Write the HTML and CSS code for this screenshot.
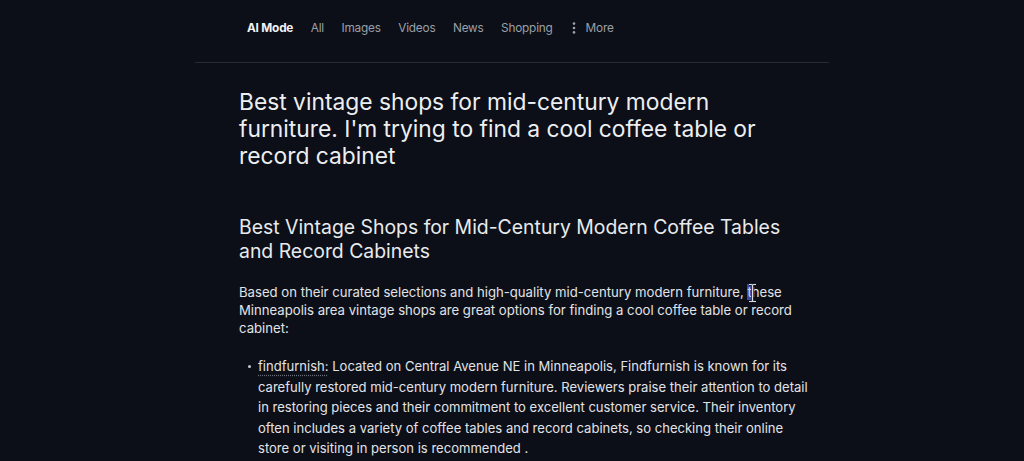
FILE: index.html
```html
<!DOCTYPE html>
<html lang="en">
<head>
<meta charset="utf-8">
<link rel="stylesheet" href="styles.css">
</head>
<body>
<div class="page">
  <nav class="tabs">
    <span class="tab active">AI Mode</span>
    <span class="tab">All</span>
    <span class="tab">Images</span>
    <span class="tab">Videos</span>
    <span class="tab">News</span>
    <span class="tab">Shopping</span>
    <span class="tab more"><svg class="dots" width="4" height="12" viewBox="0 0 4 12"><circle cx="2" cy="1.6" r="1.3"/><circle cx="2" cy="6" r="1.3"/><circle cx="2" cy="10.4" r="1.3"/></svg>More</span>
  </nav>
  <main class="content">
    <h1 class="query">Best vintage shops for mid-century modern furniture. I'm trying to find a cool coffee table or record cabinet</h1>
    <h2 class="answer-title">Best Vintage Shops for Mid-Century Modern Coffee Tables and Record Cabinets</h2>
    <p class="intro">Based on their curated selections and high-quality mid-century modern furniture, <span class="sel">t<svg class="ibeam" width="9" height="20" viewBox="0 0 9 20"><path d="M1 1.5h2.5c0.6 0 1 0.4 1 1v15c0 0.6 0.4 1 1 1H8M8 1.5H5.5c-0.6 0-1 0.4-1 1M4.5 17.5c0 0.6-0.4 1-1 1H1" fill="none" stroke="#1b1e2a" stroke-width="2.6"/><path d="M1 1.5h2.5c0.6 0 1 0.4 1 1v15c0 0.6 0.4 1 1 1H8M8 1.5H5.5c-0.6 0-1 0.4-1 1M4.5 17.5c0 0.6-0.4 1-1 1H1" fill="none" stroke="#d9dbe2" stroke-width="1.2"/></svg></span>hese Minneapolis area vintage shops are great options for finding a cool coffee table or record cabinet:</p>
    <ul class="shops">
      <li><span class="shop">findfurnish:</span> Located on Central Avenue NE in Minneapolis, Findfurnish is known for its carefully restored mid-century modern furniture. Reviewers praise their attention to detail in restoring pieces and their commitment to excellent customer service. Their inventory often includes a variety of coffee tables and record cabinets, so checking their online store or visiting in person is recommended .</li>
    </ul>
  </main>
</div>
</body>
</html>
```
FILE: styles.css
```css
html, body {
  margin: 0;
  padding: 0;
  background: #0c0f17;
  height: 100%;
  overflow: hidden;
}
body {
  font-family: Inter, Roboto, "Liberation Sans", sans-serif;
  color: #e2e3e7;
}
.page {
  width: 634px;
  margin: 0 auto;
}
.tabs {
  display: flex;
  align-items: center;
  padding: 19px 0 25px 52px;
  border-bottom: 1px solid #262a33;
  font-size: 11.8px;
  line-height: 18px;
  letter-spacing: -0.2px;
}
.tab {
  color: #9aa0a8;
  margin-right: 17.5px;
}
.tab.active {
  color: #f1f2f4;
  font-weight: 700;
}
.tab.more {
  display: flex;
  align-items: center;
  margin-left: 1.5px;
}
.dots {
  margin-right: 10px;
  fill: #9aa0a8;
}
.content {
  padding-left: 44px;
  width: 577px;
}
.query {
  margin: 25px 0 0;
  width: 545px;
  font-size: 22.8px;
  line-height: 27px;
  font-weight: 400;
  color: #eceef1;
}
.answer-title {
  margin: 46px 0 0;
  width: 562px;
  font-size: 19.4px;
  line-height: 24px;
  font-weight: 400;
  color: #e8eaed;
}
.intro {
  margin: 20px 0 0;
  font-size: 13.15px;
  line-height: 18px;
  color: #e2e3e7;
}
.sel {
  position: relative;
  background: #3f4c9e;
  color: #cdd3ff;
}
.ibeam {
  position: absolute;
  left: 1px;
  top: -1px;
}
.shops {
  margin: 19px 0 0;
  padding: 0 0 0 19px;
  font-size: 13.05px;
  line-height: 20.5px;
  list-style: none;
}
.shops li {
  position: relative;
}
.shops li::before {
  content: "";
  position: absolute;
  left: -10px;
  top: 9px;
  width: 3px;
  height: 3px;
  border-radius: 50%;
  background: #c8cad0;
}
.shop {
  text-decoration: underline dotted #6a6f7a;
  text-underline-offset: 4px;
}
```
